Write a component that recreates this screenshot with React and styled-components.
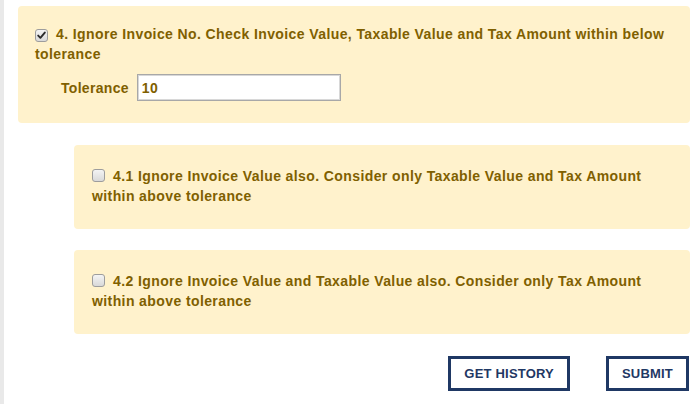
import styled, { createGlobalStyle } from 'styled-components';
import { useState } from 'react';

const GlobalStyle = createGlobalStyle`
  html, body {
    margin: 0;
    padding: 0;
    background: #ffffff;
  }
  body {
    font-family: "Liberation Sans", Arial, sans-serif;
  }
  * {
    box-sizing: border-box;
  }
`;

// small grey checkbox, old browser look
const CheckBox = ({ checked, onToggle }) => (
  <Box $checked={checked} onClick={onToggle} role="checkbox" aria-checked={checked}>
    {checked && (
      <svg width="9" height="9" viewBox="0 0 9 9">
        <path d="M1.2 4.6 L3.4 6.8 L7.8 1.6" fill="none" stroke="#2b2b2b" strokeWidth="1.9" strokeLinecap="round" strokeLinejoin="round" />
      </svg>
    )}
  </Box>
);

const Option = ({ checked, onToggle, children }) => (
  <Line>
    <CheckBox checked={checked} onToggle={onToggle} />
    {children}
  </Line>
);

const App = () => {
  // main option is ticked, sub options are not
  const [main, setMain] = useState(true);
  const [subA, setSubA] = useState(false);
  const [subB, setSubB] = useState(false);
  const [tolerance, setTolerance] = useState('10');

  return (
    <>
      <GlobalStyle />
      <Page>
        <Panel>
          <Option checked={main} onToggle={() => setMain(!main)}>
            4. Ignore Invoice No. Check Invoice Value, Taxable Value and Tax Amount within below tolerance
          </Option>
          <ToleranceRow>
            <Label htmlFor="tol">Tolerance</Label>
            <Input id="tol" type="text" value={tolerance} onChange={(e) => setTolerance(e.target.value)} />
          </ToleranceRow>
        </Panel>

        <SubList>
          <SubPanel>
            <Option checked={subA} onToggle={() => setSubA(!subA)}>
              4.1 Ignore Invoice Value also. Consider only Taxable Value and Tax Amount within above tolerance
            </Option>
          </SubPanel>
          <SubPanel>
            <Option checked={subB} onToggle={() => setSubB(!subB)}>
              4.2 Ignore Invoice Value and Taxable Value also. Consider only Tax Amount within above tolerance
            </Option>
          </SubPanel>
        </SubList>

        <Actions>
          <Button type="button">GET HISTORY</Button>
          <Button type="button">SUBMIT</Button>
        </Actions>
      </Page>
    </>
  );
};

const Page = styled.div`
  min-height: 100vh;
  border-left: 4px solid #e9e9e9;
  padding: 6px 10px 15px 14px;
`;

const Panel = styled.div`
  background: #fff2cc;
  border-radius: 4px;
  padding: 18px 18px 22px 17px;
`;

const SubList = styled.div`
  display: flex;
  flex-direction: column;
  gap: 21px;
  margin: 22px 0 0 56px;
`;

const SubPanel = styled.div`
  background: #fff2cc;
  border-radius: 4px;
  padding: 21px 18px 23px 18px;
`;

const Line = styled.div`
  color: #7f6000;
  font-size: 14px;
  font-weight: bold;
  line-height: 20px;
  letter-spacing: 0.4px;
`;

const Box = styled.span`
  display: inline-flex;
  align-items: center;
  justify-content: center;
  width: 13px;
  height: 13px;
  margin-right: 8px;
  vertical-align: -1px;
  border: 1px solid #9d9d9d;
  border-radius: 3px;
  background: linear-gradient(#f4f4f4, #d9d9d9);
  cursor: pointer;
`;

const ToleranceRow = styled.div`
  display: flex;
  align-items: center;
  gap: 8px;
  margin-top: 10px;
  padding-left: 26px;
`;

const Label = styled.label`
  color: #7f6000;
  font-size: 14px;
  font-weight: bold;
  letter-spacing: 0.3px;
`;

const Input = styled.input`
  width: 204px;
  height: 27px;
  padding: 0 4px;
  border: 1px solid #a8a8a8;
  box-shadow: inset 0 0 0 1px #d8d8d8;
  background: #ffffff;
  color: #7f6000;
  font-family: "Liberation Sans", Arial, sans-serif;
  font-size: 14px;
  font-weight: bold;
  letter-spacing: 0.4px;
  outline: none;
`;

const Actions = styled.div`
  display: flex;
  justify-content: flex-end;
  gap: 36px;
  margin: 22px 1px 0 0;
`;

const Button = styled.button`
  height: 35px;
  padding: 0 13px;
  border: 3px solid #1f3864;
  background: #ffffff;
  color: #1f3864;
  font-family: "Liberation Sans", Arial, sans-serif;
  font-size: 13px;
  font-weight: bold;
  letter-spacing: 0.2px;
  cursor: pointer;
`;

export default App;
